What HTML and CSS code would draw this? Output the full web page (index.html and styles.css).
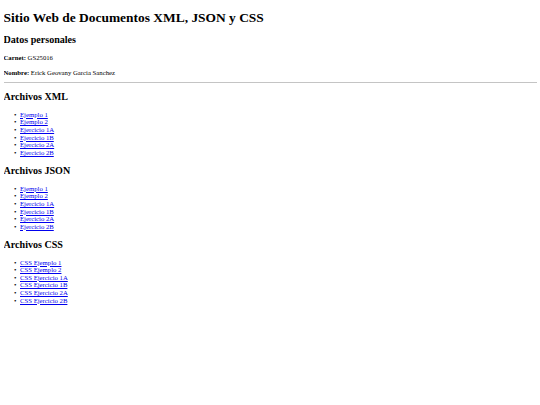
FILE: index.html
```html
<!DOCTYPE html>
<html lang="es">
<head>
<meta charset="utf-8">
<title>Sitio Web de Documentos XML, JSON y CSS</title>
<link rel="stylesheet" href="styles.css">
</head>
<body class="page">
<h1 class="title">Sitio Web de Documentos XML, JSON y CSS</h1>
<h2 class="section">Datos personales</h2>
<p class="info"><strong>Carnet:</strong> GS25016</p>
<p class="info"><strong>Nombre:</strong> Erick Geovany Garcia Sanchez</p>
<hr class="rule">
<h2 class="section">Archivos XML</h2>
<ul class="files">
<li><a href="#">Ejemplo 1</a></li>
<li><a href="#">Ejemplo 2</a></li>
<li><a href="#">Ejercicio 1A</a></li>
<li><a href="#">Ejercicio 1B</a></li>
<li><a href="#">Ejercicio 2A</a></li>
<li><a href="#">Ejercicio 2B</a></li>
</ul>
<h2 class="section">Archivos JSON</h2>
<ul class="files">
<li><a href="#">Ejemplo 1</a></li>
<li><a href="#">Ejemplo 2</a></li>
<li><a href="#">Ejercicio 1A</a></li>
<li><a href="#">Ejercicio 1B</a></li>
<li><a href="#">Ejercicio 2A</a></li>
<li><a href="#">Ejercicio 2B</a></li>
</ul>
<h2 class="section">Archivos CSS</h2>
<ul class="files">
<li><a href="#">CSS Ejemplo 1</a></li>
<li><a href="#">CSS Ejemplo 2</a></li>
<li><a href="#">CSS Ejercicio 1A</a></li>
<li><a href="#">CSS Ejercicio 1B</a></li>
<li><a href="#">CSS Ejercicio 2A</a></li>
<li><a href="#">CSS Ejercicio 2B</a></li>
</ul>
</body>
</html>
```
FILE: styles.css
```css
html, body { background: #fff; }
.page {
  margin: 3.3px 3.5px;
  font-family: "Liberation Serif", "Times New Roman", serif;
  font-size: 6.72px;
  line-height: 7.64px;
  color: #000;
}
.title {
  font-size: 13.44px;
  line-height: 15.3px;
  font-weight: bold;
  margin: 7px 0 8.9px;
}
.section {
  font-size: 10.08px;
  line-height: 11.5px;
  font-weight: bold;
  margin: 8.27px 0;
}
.info {
  font-size: 6.72px;
  line-height: 7.64px;
  margin: 6.64px 0;
}
.rule {
  margin: -1px 0 3.3px;
  border: none;
  border-top: 1px solid #c4c4c4;
  height: 0;
}
.files {
  margin: 8.27px 0;
  padding-left: 16.5px;
  color: #000;
}
.files li { line-height: 7.64px; color: #000; }
.files li::marker {
  content: "\2022\00a0\00a0";
  font-size: 7px;
  color: #000;
}
.files a { color: #0000ee; }
```
